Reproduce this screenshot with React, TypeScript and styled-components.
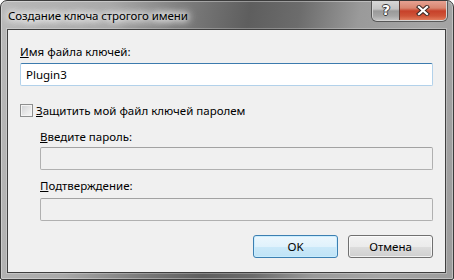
import React from "react"
import styled, { createGlobalStyle } from "styled-components"

const FONT = `"Noto Sans", "Open Sans", sans-serif`

const Global = createGlobalStyle`
    html, body {
        margin: 0;
        padding: 0;
        background: #ffffff;
    }
    body {
        font-family: ${FONT};
        font-size: 11.5px;
    }
`

const Window = styled('div')`
    width: 454px;
    height: 280px;
    box-sizing: border-box;
    display: flex;
    flex-direction: column;
    border: 1px solid #3b3b3b;
    border-radius: 7px 7px 2px 2px;
    background:
        linear-gradient(100deg,
            #b9b9b9 0%, #a9a9a9 22%, #7a7a7a 38%, #5e5e5e 50%,
            #6c6c6c 60%, #9a9a9a 72%, #a6a6a6 86%, #9c9c9c 100%);
    box-shadow: inset 0 0 0 1px rgba(255, 255, 255, 0.35);
    overflow: hidden;
`

const TitleBar = styled('div')`
    height: 28px;
    display: flex;
    justify-content: space-between;
    align-items: flex-start;
    padding-left: 7px;
    padding-right: 6px;
`

const Caption = styled('div')`
    margin-top: 7px;
    font-size: 11.5px;
    letter-spacing: -0.1px;
    color: #000;
    white-space: nowrap;
    text-shadow:
        0 0 6px #fff, 0 0 8px #fff, 0 0 10px #fff, 0 0 12px rgba(255,255,255,0.9);
`

const CaptionButtons = styled('div')`
    display: flex;
    margin-top: -1px;
    border: 1px solid rgba(255, 255, 255, 0.55);
    border-top: none;
    border-radius: 0 0 5px 5px;
    overflow: hidden;
    box-shadow: 0 0 0 1px rgba(40, 40, 40, 0.6);
`

const CaptionButton = styled('div')<{ $kind: 'help' | 'close' }>`
    height: 20px;
    width: ${p => (p.$kind === 'close' ? '47px' : '26px')};
    display: flex;
    align-items: center;
    justify-content: center;
    box-sizing: border-box;
    border-left: ${p => (p.$kind === 'close' ? '1px solid #5c3a33' : 'none')};
    background: ${p =>
        p.$kind === 'close'
            ? 'linear-gradient(#e8a597 0%, #d98670 40%, #c7412a 55%, #cf5438 80%, #e27d5e 100%)'
            : 'linear-gradient(#d9d9d9 0%, #c4c4c4 45%, #9a9a9a 55%, #a6a6a6 80%, #c2c2c2 100%)'};
`

const HelpGlyph = styled('span')`
    font-family: "DejaVu Sans", sans-serif;
    font-weight: bold;
    font-size: 14px;
    line-height: 1;
    color: #fff;
    text-shadow:
        1px 0 0 #3a3a3a, -1px 0 0 #3a3a3a, 0 1px 0 #3a3a3a, 0 -1px 0 #3a3a3a;
`

const Client = styled('div')`
    flex: 1;
    margin: 0 7px 6px 6px;
    border: 1px solid #3f3f3f;
    background: #f0f0f0;
    padding: 14px 12px 0 12px;
    display: flex;
    flex-direction: column;
    box-shadow: 0 0 0 1px rgba(255, 255, 255, 0.25);
`

const Label = styled('div')<{ $indent?: boolean; $top?: number }>`
    line-height: 15px;
    color: #000;
    margin-left: ${p => (p.$indent ? '20px' : '0')};
    margin-top: ${p => p.$top ?? 0}px;
    white-space: nowrap;
`

const TextBox = styled('div')<{ $active?: boolean; $indent?: boolean; $top?: number }>`
    height: 23px;
    box-sizing: border-box;
    margin-left: ${p => (p.$indent ? '20px' : '0')};
    margin-top: ${p => p.$top ?? 0}px;
    border: 1px solid ${p => (p.$active ? '#b2d1ea' : '#b0b0b0')};
    border-top-color: ${p => (p.$active ? '#3c7bae' : '#a2a2a2')};
    border-radius: 2px;
    background: ${p => (p.$active ? '#ffffff' : '#f0f0f0')};
    padding-left: 5px;
    display: flex;
    align-items: center;
    color: #000;
`

const CheckRow = styled('div')`
    display: flex;
    align-items: center;
    gap: 3px;
    margin-top: 17px;
    height: 15px;
`

const CheckBox = styled('div')`
    width: 13px;
    height: 13px;
    box-sizing: border-box;
    border: 1px solid #8e8f8f;
    background: linear-gradient(135deg, #cfd1d4 0%, #eaeaea 60%, #f7f7f7 100%);
    box-shadow: inset 0 0 0 1px #f4f4f4;
`

const ButtonRow = styled('div')`
    display: flex;
    justify-content: flex-end;
    gap: 10px;
    margin-top: 14px;
`

const Button = styled('div')<{ $default?: boolean }>`
    width: 85px;
    height: 23px;
    box-sizing: border-box;
    border-radius: 3px;
    display: flex;
    align-items: center;
    justify-content: center;
    color: #000;
    border: 1px solid ${p => (p.$default ? '#3c7fb1' : '#707070')};
    background: ${p =>
        p.$default
            ? 'linear-gradient(#ecf7fd 0%, #e0f2fc 50%, #cbe9f9 51%, #bfe3f6 100%)'
            : 'linear-gradient(#f2f2f2 0%, #ebebeb 50%, #dddddd 51%, #cfcfcf 100%)'};
    box-shadow: inset 0 0 0 1px ${p => (p.$default ? 'rgba(200, 236, 255, 0.9)' : 'rgba(255,255,255,0.7)')};
`

const CloseIcon = () => (
    <svg width="14" height="11" viewBox="0 0 14 11">
        <path d="M3 2 L11 9 M11 2 L3 9" stroke="#3d2a26" strokeWidth="4.2" strokeLinecap="square" />
        <path d="M3 2 L11 9 M11 2 L3 9" stroke="#ffffff" strokeWidth="2.2" strokeLinecap="square" />
    </svg>
)

export default function App() {
    return (
        <>
            <Global />
            <Window>
                <TitleBar>
                    <Caption>Создание ключа строгого имени</Caption>
                    <CaptionButtons>
                        <CaptionButton $kind="help"><HelpGlyph>?</HelpGlyph></CaptionButton>
                        <CaptionButton $kind="close"><CloseIcon /></CaptionButton>
                    </CaptionButtons>
                </TitleBar>
                <Client>
                    <Label><u>И</u>мя файла ключей:</Label>
                    <TextBox $active $top={4}>Plugin3</TextBox>
                    <CheckRow>
                        <CheckBox />
                        <span><u>З</u>ащитить мой файл ключей паролем</span>
                    </CheckRow>
                    <Label $indent $top={11}><u>В</u>ведите пароль:</Label>
                    <TextBox $indent $top={3} />
                    <Label $indent $top={8}><u>П</u>одтверждение:</Label>
                    <TextBox $indent $top={5} />
                    <ButtonRow>
                        <Button $default>OK</Button>
                        <Button>Отмена</Button>
                    </ButtonRow>
                </Client>
            </Window>
        </>
    )
}
